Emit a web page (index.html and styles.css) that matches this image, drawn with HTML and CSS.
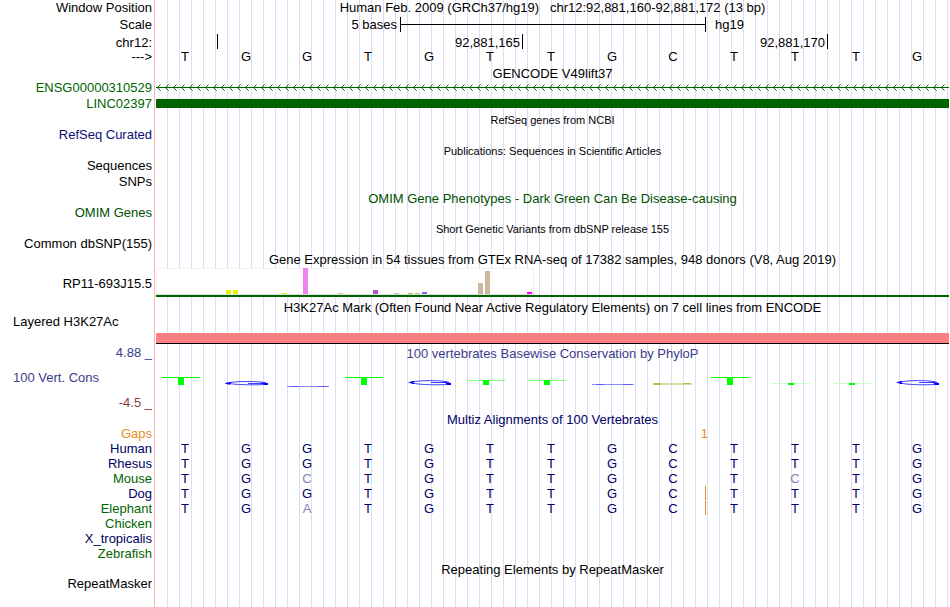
FILE: index.html
```
<!DOCTYPE html>
<html lang="en">
<head>
    <meta charset="UTF-8">
    <meta name="viewport" content="width=device-width, initial-scale=1.0">
    <title>Genome Browser</title>
    <link rel="stylesheet" href="styles.css">
</head>
<body>
    <svg class="defs" aria-hidden="true">
        <symbol id="logo-t4" viewBox="0 0 61 34">
            <path fill="#00ff00" d="M6 16h38v1H6zM22 17h6v7h-6z"/>
        </symbol>
        <symbol id="logo-t3" viewBox="0 0 61 34">
            <path fill="#80ff80" d="M6 19h38v1H6z"/>
            <path fill="#00ff00" d="M22 19h6v5h-6z"/>
        </symbol>
        <symbol id="logo-t1" viewBox="0 0 61 34">
            <path fill="#c8ffc8" d="M6 22h38v1H6z"/>
            <path fill="#00ff00" d="M22 22h6v2h-6z"/>
        </symbol>
        <symbol id="logo-g" viewBox="0 0 61 34">
            <path fill="none" stroke="#4040ff" d="M49 21.500C45 19 15 19 12 21.500C14 24 42 24 47 23.500M31 21.500h16"/>
            <path fill="#0000ff" d="M8 21.500l5-1.500h2l-2 1.500l2 1.500h-2zM43 20.500l8 1.500v2h-4l-1-1.500z"/>
        </symbol>
        <symbol id="logo-g2" viewBox="0 0 61 34">
            <path fill="none" stroke="#4040ff" d="M49 22C45 20 15 20 12 22C14 24 42 24 47 23.500M31 22.500h16"/>
            <path fill="#0000ff" d="M8 22l5-1h2l-2 1.500l1 1h-3l-3-1zM43 21.500l8 .5v2h-4l-1-1z"/>
        </symbol>
        <symbol id="logo-g-flat" viewBox="0 0 61 34">
            <path fill="#8c8cff" d="M9 23h42v1H9z"/>
            <path fill="#5a5aff" d="M13 23h8v1h-8zM40 23h9v1h-9z"/>
        </symbol>
        <symbol id="logo-g-low" viewBox="0 0 61 34">
            <path fill="#8c8cff" d="M9 25h42v1H9z"/>
            <path fill="#5a5aff" d="M13 25h8v1h-8zM40 25h9v1h-9z"/>
        </symbol>
        <symbol id="logo-c" viewBox="0 0 61 34">
            <path fill="#d8d8a0" d="M9 22h39v2H9z"/>
            <path fill="#b8b840" d="M10 22h6v2h-6zM40 22h6v1h-6z"/>
        </symbol>
    </svg>

    <main class="browser">
        <div class="row head">
            <span class="label">Window Position</span>
            <h1 class="title">Human Feb. 2009 (GRCh37/hg19) &nbsp; chr12:92,881,160-92,881,172 (13 bp)</h1>
        </div>
        <div class="row head">
            <span class="label">Scale</span>
            <div class="bases">
                <span class="scale-text">5 bases</span>
                <span class="scale-bar"></span>
                <span class="scale-db">hg19</span>
            </div>
        </div>
        <div class="row ruler">
            <span class="label">chr12:</span>
            <div class="bases">
                <span class="tick"></span>
                <span class="tick wide">92,881,165</span>
                <span class="tick wide">92,881,170</span>
            </div>
        </div>
        <div class="row head">
            <span class="label">---&gt;</span>
            <div class="bases seq">
                <span>T</span><span>G</span><span>G</span><span>T</span><span>G</span><span>T</span><span>T</span><span>G</span><span>C</span><span>T</span><span>T</span><span>T</span><span>G</span>
            </div>
        </div>

        <!-- genes -->
        <div class="row short"><h2 class="title">GENCODE V49lift37</h2></div>
        <div class="row">
            <span class="label green">ENSG00000310529</span>
            <svg class="intron" width="100%" height="15">
                <pattern id="arrows" width="8" height="15" patternUnits="userSpaceOnUse">
                    <path fill="none" stroke="#006400" d="M4.500 4.500L1.500 7.500L4.500 10.500"/>
                </pattern>
                <rect width="100%" height="15" fill="url(#arrows)"/>
                <rect y="7" width="100%" height="1" fill="#006400"/>
            </svg>
        </div>
        <div class="row tall gene">
            <span class="label green">LINC02397</span>
            <div class="exon"></div>
        </div>
        <div class="row tall"><h2 class="title small">RefSeq genes from NCBI</h2></div>
        <div class="row"><span class="label navy">RefSeq Curated</span></div>
        <div class="row tall"><h2 class="title small">Publications: Sequences in Scientific Articles</h2></div>
        <div class="row tall"><span class="label">Sequences</span></div>
        <div class="row tall"><span class="label">SNPs</span></div>
        <div class="row"><h2 class="title omim">OMIM Gene Phenotypes - Dark Green Can Be Disease-causing</h2></div>
        <div class="row"><span class="label omim">OMIM Genes</span></div>
        <div class="row tall"><h2 class="title small">Short Genetic Variants from dbSNP release 155</h2></div>
        <div class="row"><span class="label">Common dbSNP(155)</span></div>

        <!-- expression -->
        <div class="row head"><h2 class="title">Gene Expression in 54 tissues from GTEx RNA-seq of 17382 samples, 948 donors (V8, Aug 2019)</h2></div>
        <div class="row gtex">
            <span class="label">RP11-693J15.5</span>
            <div class="gtex-track">
                <svg class="chart" width="378" height="27" viewBox="0 0 378 27">
                    <path fill="#ffffff" d="M0 0h378v27H0z"/>
                    <path fill="#f0f0f0" d="M0 0h378v1H0zM0 1h1v26H0zM377 1h1v26h-1z"/>
                    <path fill="#dcdcdc" d="M0 26h378v1H0z"/>
                    <path fill="#eeee00" d="M70 22h5v4h-5zM77 22h5v4h-5zM126 25h5v1h-5z"/>
                    <path fill="#ee82ee" d="M147 0h5v26h-5z"/>
                    <path fill="#eec591" d="M182 25h5v1h-5z"/>
                    <path fill="#b452cd" d="M217 22h5v4h-5z"/>
                    <path fill="#cdb79e" d="M238 25h5v1h-5zM259 25h5v1h-5zM322 15h5v11h-5zM329 3h5v23h-5z"/>
                    <path fill="#9acd32" d="M252 25h5v1h-5z"/>
                    <path fill="#7a67ee" d="M266 24h5v2h-5z"/>
                    <path fill="#ff00ff" d="M371 24h5v2h-5z"/>
                </svg>
            </div>
        </div>

        <!-- regulation -->
        <div class="row"><h2 class="title">H3K27Ac Mark (Often Found Near Active Regulatory Elements) on 7 cell lines from ENCODE</h2></div>
        <div class="row h3k">
            <span class="label left">Layered H3K27Ac</span>
            <div class="signal"></div>
        </div>

        <!-- conservation -->
        <div class="row tall">
            <span class="label cons">4.88 _</span>
            <h2 class="title cons">100 vertebrates Basewise Conservation by PhyloP</h2>
        </div>
        <div class="row phylop">
            <span class="label left cons">100 Vert. Cons</span>
            <div class="bases logos">
                <svg><use href="#logo-t4"/></svg>
                <svg><use href="#logo-g2"/></svg>
                <svg><use href="#logo-g-low"/></svg>
                <svg><use href="#logo-t4"/></svg>
                <svg><use href="#logo-g"/></svg>
                <svg><use href="#logo-t3"/></svg>
                <svg><use href="#logo-t3"/></svg>
                <svg><use href="#logo-g-flat"/></svg>
                <svg><use href="#logo-c"/></svg>
                <svg><use href="#logo-t4"/></svg>
                <svg><use href="#logo-t1"/></svg>
                <svg><use href="#logo-t1"/></svg>
                <svg><use href="#logo-g"/></svg>
            </div>
        </div>
        <div class="row tall"><span class="label neg">-4.5 _</span></div>

        <!-- alignment -->
        <div class="row"><h2 class="title dark">Multiz Alignments of 100 Vertebrates</h2></div>
        <div class="row">
            <span class="label orange">Gaps</span>
            <div class="bases"><span class="gap-count">1</span></div>
        </div>
        <div class="row">
            <span class="label dark">Human</span>
            <div class="bases seq dark">
                <span>T</span><span>G</span><span>G</span><span>T</span><span>G</span><span>T</span><span>T</span><span>G</span><span>C</span><span>T</span><span>T</span><span>T</span><span>G</span>
            </div>
        </div>
        <div class="row">
            <span class="label dark">Rhesus</span>
            <div class="bases seq dark">
                <span>T</span><span>G</span><span>G</span><span>T</span><span>G</span><span>T</span><span>T</span><span>G</span><span>C</span><span>T</span><span>T</span><span>T</span><span>G</span>
            </div>
        </div>
        <div class="row">
            <span class="label green">Mouse</span>
            <div class="bases seq dark">
                <span>T</span><span>G</span><span class="diff">C</span><span>T</span><span>G</span><span>T</span><span>T</span><span>G</span><span>C</span><span>T</span><span class="diff">C</span><span>T</span><span>G</span>
            </div>
        </div>
        <div class="row">
            <span class="label dark">Dog</span>
            <div class="bases seq dark">
                <span>T</span><span>G</span><span>G</span><span>T</span><span>G</span><span>T</span><span>T</span><span>G</span><span class="insert">C</span><span>T</span><span>T</span><span>T</span><span>G</span>
            </div>
        </div>
        <div class="row">
            <span class="label green">Elephant</span>
            <div class="bases seq dark">
                <span>T</span><span>G</span><span class="diff">A</span><span>T</span><span>G</span><span>T</span><span>T</span><span>G</span><span class="insert">C</span><span>T</span><span>T</span><span>T</span><span>G</span>
            </div>
        </div>
        <div class="row"><span class="label green">Chicken</span></div>
        <div class="row"><span class="label dark">X_tropicalis</span></div>
        <div class="row"><span class="label green">Zebrafish</span></div>

        <!-- repeats -->
        <div class="row"><h2 class="title">Repeating Elements by RepeatMasker</h2></div>
        <div class="row"><span class="label">RepeatMasker</span></div>
    </main>
</body>
</html>
```
FILE: styles.css
```
* {
    margin: 0;
    padding: 0;
    box-sizing: border-box;
}
body {
    background-color: #ffffff;
    color: #000000;
    font-family: "Liberation Sans", Arial, Helvetica, sans-serif;
    font-size: 13px;
    line-height: 16px;
}
.defs {
    display: none;
}
/* pink divider, then a guide line every 12px */
.browser {
    min-height: 100vh;
    padding-right: 1px;
    background-image:
        linear-gradient(#ffb4b4, #ffb4b4),
        linear-gradient(#ffffff, #ffffff),
        repeating-linear-gradient(to right, transparent 0 11px, #dcdcf5 11px 12px);
    background-size: 1px 100%, 156px 100%, 100% 100%;
    background-position: 154px 0, 0 0, 0 0;
    background-repeat: no-repeat;
}
.row {
    display: grid;
    grid-template-columns: 152px 1fr;
    column-gap: 4px;
    height: 15px;
    white-space: nowrap;
}
.short {
    height: 14px;
}
.tall {
    height: 16px;
}
.head {
    height: 17px;
}
.label {
    grid-column: 1;
    text-align: right;
}
.left {
    padding-left: 13px;
    text-align: left;
}
.title {
    grid-column: 2;
    font-size: 13px;
    font-weight: normal;
    text-align: center;
}
h2.title,
.gene,
.ruler {
    line-height: 18px;
}
.short .title {
    line-height: 16px;
}
.title.small {
    font-size: 11px;
}
.green {
    color: #006400;
}
.omim {
    color: #005000;
}
.navy {
    color: #0c0c78;
}
.dark {
    color: #000064;
}
.cons {
    color: #3c3c8c;
}
.neg {
    color: #8c3c3c;
}
.orange {
    color: #e68c1e;
}

/* one column per base */
.bases {
    display: grid;
    grid-template-columns: repeat(13, minmax(0, 1fr));
}
.seq span {
    padding-right: 3px;
    text-align: center;
}
.seq .diff {
    color: #8080b1;
}
.seq .insert {
    height: 14px;
    margin-right: -1px;
    border-right: 1px solid #e68c1e;
}
.gap-count {
    grid-column: 9;
    margin-right: -3px;
    color: #e68c1e;
    text-align: right;
}
.scale-text {
    grid-column: span 4;
    padding-right: 3px;
    text-align: right;
}
.scale-bar {
    grid-column: span 5;
    height: 15px;
    margin-right: -1px;
    border: solid #000000;
    border-width: 0 1px;
    background: linear-gradient(#000000, #000000) 0 7px / 100% 1px no-repeat;
}
.scale-db {
    grid-column: span 4;
    padding-left: 10px;
}
.tick {
    height: 15px;
    margin-right: -1px;
    padding-right: 2px;
    border-right: 1px solid #000000;
    text-align: right;
}
.wide {
    grid-column: span 5;
}

.exon {
    height: 9px;
    margin-top: 4px;
    background-color: #006400;
}
.gtex {
    height: 31px;
    line-height: 31px;
}
.gtex-track {
    height: 29px;
    border-bottom: 2px solid #006400;
}
.chart {
    display: block;
}
.h3k {
    height: 31px;
}
.signal {
    height: 11px;
    margin-top: 19px;
    border-bottom: 1px solid #000000;
    background-color: #ff8080;
}
.phylop {
    height: 34px;
    line-height: 34px;
}
.logos svg {
    width: 61px;
    height: 34px;
}
```
